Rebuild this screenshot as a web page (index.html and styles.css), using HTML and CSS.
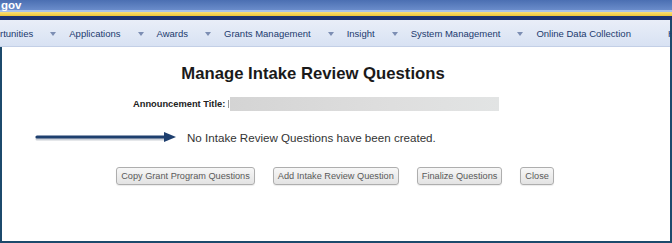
FILE: index.html
```html
<!DOCTYPE html>
<html lang="en">
<head>
<meta charset="utf-8">
<title>Manage Intake Review Questions</title>
<link rel="stylesheet" href="styles.css">
</head>
<body>
<div class="page">
  <header class="banner">
    <div class="banner-top"><span class="brand">gov</span></div>
    <div class="banner-light"></div>
    <div class="banner-yellow"></div>
    <div class="banner-navy"></div>
  </header>
  <div class="frame">
    <nav class="nav">
      <span class="nav-item">rtunities<i class="caret"></i></span>
      <span class="nav-item">Applications<i class="caret"></i></span>
      <span class="nav-item">Awards<i class="caret"></i></span>
      <span class="nav-item">Grants Management<i class="caret"></i></span>
      <span class="nav-item">Insight<i class="caret"></i></span>
      <span class="nav-item">System Management<i class="caret"></i></span>
      <span class="nav-item nav-plain">Online Data Collection</span>
      <span class="nav-item nav-last">H</span>
    </nav>
    <main class="content">
      <h1 class="title">Manage Intake Review Questions</h1>
      <div class="announce">
        <span class="announce-label">Announcement Title:</span>
        <span class="announce-tick"></span>
        <span class="announce-value"></span>
      </div>
      <div class="message-row">
        <svg class="pointer" width="142" height="18" viewBox="0 0 142 18">
          <line x1="2" y1="10" x2="132" y2="10" stroke="#9aa3b0" stroke-width="3" stroke-linecap="round" opacity="0.5"/>
          <line x1="2" y1="8" x2="132" y2="8" stroke="#1e3f6e" stroke-width="3.2" stroke-linecap="round"/>
          <polygon points="129,3 141,8 129,13" fill="#1e3f6e"/>
        </svg>
        <span class="message">No Intake Review Questions have been created.</span>
      </div>
      <div class="actions">
        <button class="btn" type="button">Copy Grant Program Questions</button>
        <button class="btn" type="button">Add Intake Review Question</button>
        <button class="btn" type="button">Finalize Questions</button>
        <button class="btn" type="button">Close</button>
      </div>
    </main>
  </div>
</div>
</body>
</html>
```

FILE: styles.css
```css
html, body {
  margin: 0;
  padding: 0;
  background: #ffffff;
}

.page {
  width: 672px;
  height: 243px;
  display: flex;
  flex-direction: column;
  font-family: "Liberation Sans", Arial, sans-serif;
  overflow: hidden;
}

.banner-top {
  height: 10px;
  background: linear-gradient(#4b6fb2, #6a8cca);
  overflow: visible;
  position: relative;
}

.brand {
  display: block;
  padding-left: 1px;
  font-size: 11.5px;
  line-height: 11px;
  font-weight: bold;
  color: #ffffff;
  position: relative;
  z-index: 1;
}

.banner-light {
  height: 2px;
  background: #a9c1e8;
}

.banner-yellow {
  height: 4px;
  background: linear-gradient(#f9e07a, #efc636);
}

.banner-navy {
  height: 4px;
  background: #1d3472;
}

.frame {
  flex: 1;
  display: flex;
  flex-direction: column;
  border-left: 2px solid #1c4a6c;
  border-right: 2px solid #1c4a6c;
  border-bottom: 2px solid #1c4a6c;
}

.nav {
  height: 26px;
  margin-left: -2px;
  display: flex;
  align-items: center;
  background: linear-gradient(#e9eef8, #d8e2f3);
  border-bottom: 1px solid #c3cfe6;
  font-size: 9.5px;
  color: #213a6e;
  white-space: nowrap;
}

.nav-item {
  display: flex;
  align-items: center;
  margin-right: 13px;
}

.caret {
  display: block;
  width: 0;
  height: 0;
  margin-left: 17px;
  margin-top: 2px;
  border-left: 3.5px solid transparent;
  border-right: 3.5px solid transparent;
  border-top: 4px solid #7c8eb3;
}

.nav-plain {
  margin-right: 37px;
}

.nav-last {
  margin-right: 0;
}

.content {
  flex: 1;
  display: flex;
  flex-direction: column;
}

.title {
  margin: 17px 0 0 0;
  padding-right: 46px;
  text-align: center;
  font-size: 16.7px;
  line-height: 20px;
  font-weight: bold;
  color: #1a1a1a;
}

.announce {
  margin-top: 13px;
  margin-left: 131px;
  height: 14px;
  display: flex;
  align-items: center;
}

.announce-label {
  font-size: 9.3px;
  font-weight: bold;
  color: #222222;
}

.announce-tick {
  width: 1px;
  height: 8px;
  margin-left: 3px;
  margin-right: 1px;
  background: #9a9a9a;
}

.announce-value {
  width: 269px;
  height: 14px;
  background: linear-gradient(90deg, #d4d4d4, #dedede 60%, #e2e4e4);
}

.message-row {
  margin-top: 20px;
  margin-left: 33px;
  height: 14px;
  display: flex;
  align-items: center;
}

.pointer {
  display: block;
  flex: none;
  margin-right: 10px;
}

.message {
  font-size: 11.6px;
  line-height: 14px;
  color: #333333;
}

.actions {
  margin-top: 22px;
  display: flex;
  justify-content: center;
  gap: 18px;
  padding-right: 2px;
}

.btn {
  height: 18px;
  padding: 0 4px;
  font-family: "Liberation Sans", Arial, sans-serif;
  font-size: 9.2px;
  color: #5a5a5a;
  background: linear-gradient(#f7f7f7, #e3e3e3);
  border: 1px solid #aeaeae;
  border-radius: 3px;
  box-shadow: 0 1px 1px rgba(0, 0, 0, 0.08);
}
```
